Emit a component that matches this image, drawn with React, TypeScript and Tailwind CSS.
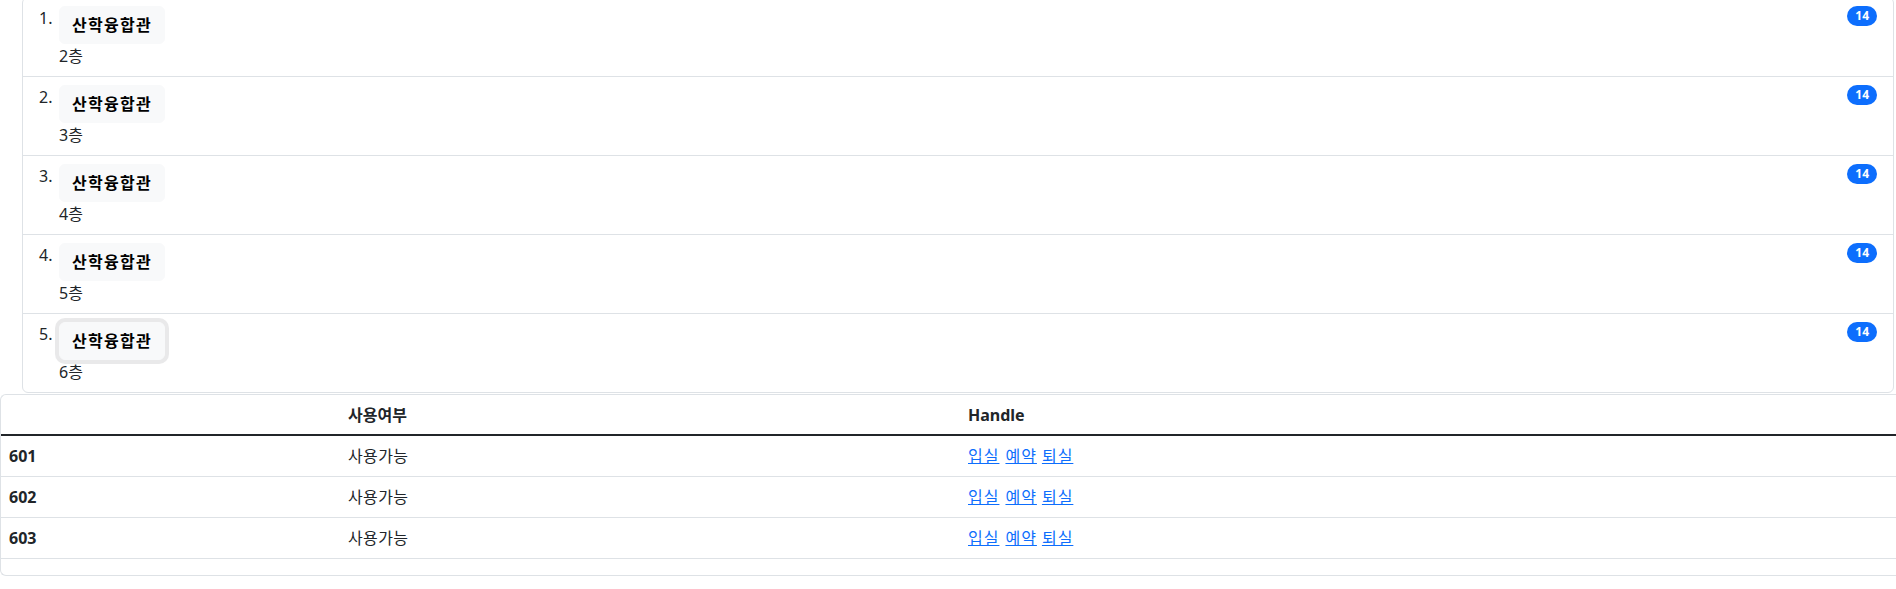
const floors = [2, 3, 4, 5, 6];
const rooms = ['601', '602', '603'];

const font = 'font-["Noto_Sans","Noto_Sans_CJK_KR",sans-serif]';

const FloorItem = ({ index, floor, focused }: { index: number; floor: number; focused?: boolean }) => (
  <li className="flex items-start justify-between border-t border-[#dee2e6] px-4 py-2 first:border-t-0">
    <div className="flex items-start">
      <span className="w-[12px] whitespace-nowrap">{index}.</span>
      <div className="ml-2 flex flex-col items-start">
        <button
          className={
            'rounded-md border border-[#f8f9fa] bg-[#f8f9fa] pr-[12px] pl-3 py-[6px] font-bold tracking-[1.3px] text-black ' +
            (focused ? 'shadow-[0_0_0_4px_rgba(211,212,213,0.5)]' : '')
          }
        >
          산학융합관
        </button>
        <span>{floor}층</span>
      </div>
    </div>
    <span className="rounded-full bg-[#0d6efd] px-[8px] py-[4px] text-xs leading-3 font-bold text-white">14</span>
  </li>
);

const Links = () => (
  <>
    <a href="#" className="mr-[6px] tracking-[1px] text-[#0d6efd] underline">입실</a>
    <a href="#" className="mr-[5px] tracking-[1px] text-[#0d6efd] underline">예약</a>
    <a href="#" className="tracking-[1px] text-[#0d6efd] underline">퇴실</a>
  </>
);

export default function App() {
  return (
    <div className={`min-h-[589px] bg-white text-base leading-6 text-[#212529] ${font}`}>
      <ol className="mt-[-3px] mr-[2px] ml-[22px] rounded-md border border-[#dee2e6]">
        {floors.map((f, i) => (
          <FloorItem key={f} index={i + 1} floor={f} focused={i === floors.length - 1} />
        ))}
      </ol>

      <div className="mt-[1px] rounded-l-md border border-r-0 border-[#dee2e6]">
        <table className="mb-4 w-full border-separate border-spacing-0 text-left">
          <thead>
            <tr>
              <th className="w-[339px] border-b-2 border-[#212529] px-2 pt-2 pb-[7px]"></th>
              <th className="w-[620px] border-b-2 border-[#212529] px-2 pt-2 pb-[7px] font-bold">사용여부</th>
              <th className="border-b-2 border-[#212529] px-2 pt-2 pb-[7px] font-bold">Handle</th>
            </tr>
          </thead>
          <tbody>
            {rooms.map((r) => (
              <tr key={r}>
                <th className="border-b border-[#dee2e6] p-2 font-bold">{r}</th>
                <td className="border-b border-[#dee2e6] p-2 tracking-[0.4px]">사용가능</td>
                <td className="border-b border-[#dee2e6] p-2">
                  <Links />
                </td>
              </tr>
            ))}
          </tbody>
        </table>
      </div>
    </div>
  );
}
